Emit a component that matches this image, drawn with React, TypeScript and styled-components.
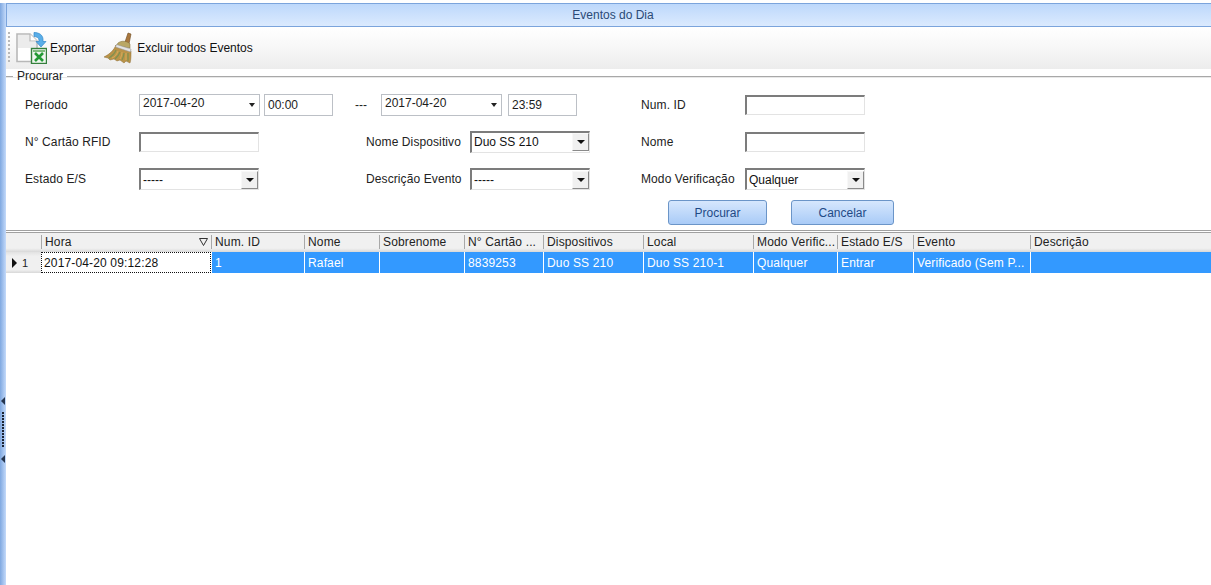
import styled, { createGlobalStyle } from "styled-components";

const GlobalStyle = createGlobalStyle`
  html, body {
    margin: 0;
    padding: 0;
    background: #fff;
  }
  body {
    font-family: "Liberation Sans", Arial, sans-serif;
    font-size: 12px;
    color: #1c1c1c;
    overflow: hidden;
  }
`;

const Page = styled.div`
  height: 585px;
  padding-top: 3px;
  box-sizing: border-box;
  display: flex;
`;

const SideBar = styled.div`
  width: 6px;
  flex: none;
  display: flex;
  flex-direction: column;
  align-items: center;
  padding-top: 394px;
  box-sizing: border-box;
  background: linear-gradient(to right, #7fa8e0, #c4dafa);
`;

const SideArrow = styled.div`
  width: 0;
  height: 0;
  border-top: 4px solid transparent;
  border-bottom: 4px solid transparent;
  border-right: 4px solid #26364f;
`;

const SideDots = styled.div`
  width: 2px;
  height: 36px;
  margin: 7px 0 7px;
  background: repeating-linear-gradient(to bottom, #1d2433 0 2px, transparent 2px 3px);
`;

const Main = styled.div`
  flex: 1;
  min-width: 0;
  display: flex;
  flex-direction: column;
`;

const TitleBar = styled.div`
  height: 24px;
  box-sizing: border-box;
  border-top: 1px solid #7ba4dc;
  border-bottom: 1px solid #7ba4dc;
  border-left: 1px solid #7ba4dc;
  display: flex;
  align-items: center;
  justify-content: center;
  padding-left: 8px;
  color: #2a4a76;
  background: linear-gradient(to bottom, #bdd8fb, #dbeafe);
`;

const Toolbar = styled.div`
  height: 42px;
  display: flex;
  align-items: center;
  padding-left: 2px;
  background: linear-gradient(to bottom, #ffffff, #f6f6f6 55%, #ececec);
`;

const Grip = styled.div`
  width: 2px;
  height: 32px;
  margin-right: 6px;
  background: repeating-linear-gradient(to bottom, #b8b8b8 0 2px, transparent 2px 4px);
`;

const ToolButton = styled.div`
  display: flex;
  align-items: center;
  height: 32px;
  margin-right: 9px;
  color: #111;
  svg {
    display: block;
    flex: none;
    margin-right: 3px;
  }
`;

const SearchGroup = styled.fieldset`
  margin: 0;
  padding: 0;
  border: 0;
  border-top: 1px solid #a8a8a8;
  box-shadow: inset 0 1px 0 #e8e8e8;
  height: 161px;
  box-sizing: border-box;
  min-width: 0;
`;

const GroupTitle = styled.legend`
  margin-left: 7px;
  padding: 0 4px;
  color: #222;
  line-height: 14px;
`;

const FormBody = styled.div`
  display: flex;
  flex-direction: column;
  padding: 3px 0 0 19px;
`;

const FormRow = styled.div<{ $height: number }>`
  display: flex;
  align-items: center;
  height: ${(p) => p.$height}px;
`;

const Cell = styled.div<{ $width: number }>`
  display: flex;
  align-items: center;
  flex: none;
  width: ${(p) => p.$width}px;
`;

const Label = styled.div<{ $width: number }>`
  flex: none;
  width: ${(p) => p.$width}px;
  color: #222;
  letter-spacing: 0.1px;
`;

const Dash = styled.div`
  flex: none;
  width: 26px;
  color: #222;
`;

const DateField = styled.div`
  width: 121px;
  height: 22px;
  box-sizing: border-box;
  border: 1px solid #bcc0c6;
  display: flex;
  align-items: center;
  justify-content: space-between;
  padding: 0 4px 3px 3px;
  &::after {
    content: "";
    margin-top: 3px;
    border-left: 3.5px solid transparent;
    border-right: 3.5px solid transparent;
    border-top: 4px solid #222;
  }
`;

const TimeField = styled.div<{ $gap: number }>`
  width: 69px;
  height: 22px;
  margin-left: ${(p) => p.$gap}px;
  box-sizing: border-box;
  border: 1px solid #bcc0c6;
  display: flex;
  align-items: center;
  padding: 0 3px;
`;

const TextBox = styled.div`
  width: 120px;
  height: 20px;
  box-sizing: border-box;
  border: 1px solid #e3e3e3;
  border-top: 2px solid #7c7c7c;
  border-left: 2px solid #7c7c7c;
`;

const SelectBox = styled.div`
  width: 120px;
  height: 22px;
  box-sizing: border-box;
  border: 1px solid #e3e3e3;
  border-top: 2px solid #7c7c7c;
  border-left: 2px solid #7c7c7c;
  display: flex;
  align-items: center;
  justify-content: space-between;
  padding-left: 2px;
  color: #111;
`;

const SelectArrow = styled.div`
  width: 17px;
  height: 18px;
  box-sizing: border-box;
  background: #f0f0f0;
  border: 1px solid;
  border-color: #f8f8f8 #8a8a8a #8a8a8a #f8f8f8;
  display: flex;
  align-items: center;
  justify-content: center;
  &::after {
    content: "";
    border-left: 4px solid transparent;
    border-right: 4px solid transparent;
    border-top: 4px solid #111;
  }
`;

const ButtonRow = styled.div`
  display: flex;
  margin-left: 643px;
  margin-top: 2px;
`;

const Button = styled.div<{ $width: number }>`
  width: ${(p) => p.$width}px;
  height: 25px;
  margin-right: 24px;
  box-sizing: border-box;
  border: 1px solid #6b95c8;
  border-radius: 3px;
  display: flex;
  align-items: center;
  justify-content: center;
  color: #1f4a86;
  background: linear-gradient(to bottom, #d6e7fd, #a9cbf7);
`;

const GridPanel = styled.div`
  flex: 1;
  border-top: 3px double #a0a0a0;
`;

const columns = "35px 170px 93px 75px 85px 79px 100px 110px 84px 76px 117px 1fr";

const HeaderRow = styled.div`
  display: grid;
  grid-template-columns: ${columns};
  height: 19px;
  background: linear-gradient(to bottom, #f0f0f0 80%, #d8d8d8);
`;

const HeadCell = styled.div`
  display: flex;
  align-items: center;
  justify-content: space-between;
  padding: 0 3px;
  margin: 2px 0 3px;
  min-width: 0;
  white-space: nowrap;
  color: #222;
  letter-spacing: 0.15px;
  border-left: 1px solid #a8a8a8;
`;

const HeadCorner = styled.div``;

const DataRow = styled.div`
  display: grid;
  grid-template-columns: ${columns};
  height: 21px;
`;

const RowMarker = styled.div`
  display: flex;
  align-items: center;
  padding-left: 6px;
  font-size: 11px;
  background: linear-gradient(to bottom, #e2e2e2, #f0f0f0 20%, #f0f0f0 85%, #d8d8d8);
  color: #222;
  &::before {
    content: "";
    margin-right: 5px;
    border-top: 5px solid transparent;
    border-bottom: 5px solid transparent;
    border-left: 5px solid #111;
  }
`;

const DataCell = styled.div<{ $active?: boolean }>`
  display: flex;
  align-items: center;
  padding-left: 3px;
  min-width: 0;
  white-space: nowrap;
  letter-spacing: 0.15px;
  color: ${(p) => (p.$active ? "#111" : "#fff")};
  background: ${(p) => (p.$active ? "#fff" : "#3399ff")};
  border-left: ${(p) => (p.$active ? "0" : "1px solid #fff")};
  outline: ${(p) => (p.$active ? "1px dotted #111" : "0")};
  outline-offset: -1px;
  box-sizing: border-box;
`;

const ExcelIcon = () => (
  <svg width="31" height="32" viewBox="0 0 31 32">
    <path d="M1 2h13l7 7v20.5H1z" fill="#fff" stroke="#b8b8b8" strokeWidth="1.6" />
    <path d="M2 3h12v7h6v6H2z" fill="#ececec" />
    <path d="M14 2v7h7" fill="#fff" stroke="#b8b8b8" strokeWidth="1.2" />
    <path d="M18 .5c5 0 9 2.500 9 7v2h3l-5 5.500-5-5.500h3V8c0-2-2.500-3.500-5-3.500z" fill="#5aaee8" stroke="#2f86c8" strokeWidth=".7" />
    <rect x="15.500" y="16.500" width="15" height="15" fill="#eef6ee" stroke="#347f3c" strokeWidth="1.400" />
    <rect x="17" y="18" width="12" height="2" fill="#7dbb7d" />
    <path d="M19 21l8 8M27 21l-8 8" stroke="#229a34" strokeWidth="2.600" />
  </svg>
);

const BroomIcon = () => (
  <svg width="30" height="32" viewBox="0 0 30 32">
    <path d="M21 10l3-9 3 1-2 10z" fill="#a9773d" stroke="#6f4b22" strokeWidth=".6" />
    <path d="M14 11c3-2.500 9-2.500 12 1v4l-14-2z" fill="#b9a765" stroke="#7d6a35" strokeWidth=".5" />
    <path d="M12 14l15 5c0 5 0 9-1 12l-4-2-2 2-4-3-3 1-3-2-4 1-2-2-4-1c6-3 10-7 12-12z" fill="#bb9348" stroke="#8a6a30" strokeWidth=".5" />
    <path d="M12.500 12.500l14.500 4.500-.5 3-15-5z" fill="#e4e4e4" stroke="#8e8e8e" strokeWidth=".5" />
    <path d="M12 18c-1 3-4 6-7 8M16 20c-1 3-3 5-5 7M20 21c0 3-1 5-2 7M24 21v8" stroke="#7f9150" strokeWidth="1.200" fill="none" />
    <path d="M14 19c-1 3-3 6-6 7M18 20c0 3-1 5-2 7M22 21v7" stroke="#d9b25e" strokeWidth=".8" fill="none" />
  </svg>
);

const headers = [
  "Hora",
  "Num. ID",
  "Nome",
  "Sobrenome",
  "N° Cartão ...",
  "Dispositivos",
  "Local",
  "Modo Verific...",
  "Estado E/S",
  "Evento",
  "Descrição",
];

const rowValues = [
  "1",
  "Rafael",
  "",
  "8839253",
  "Duo SS 210",
  "Duo SS 210-1",
  "Qualquer",
  "Entrar",
  "Verificado (Sem P...",
  "",
];

export default function App() {
  return (
    <>
      <GlobalStyle />
      <Page>
        <SideBar>
          <SideArrow />
          <SideDots />
          <SideArrow />
        </SideBar>
        <Main>
          <TitleBar>Eventos do Dia</TitleBar>
          <Toolbar>
            <Grip />
            <ToolButton>
              <ExcelIcon />
              Exportar
            </ToolButton>
            <ToolButton>
              <BroomIcon />
              Excluir todos Eventos
            </ToolButton>
          </Toolbar>
          <SearchGroup>
            <GroupTitle>Procurar</GroupTitle>
            <FormBody>
              <FormRow $height={37}>
                <Cell $width={330}>
                  <Label $width={114}>Período</Label>
                  <DateField>2017-04-20</DateField>
                  <TimeField $gap={4}>00:00</TimeField>
                </Cell>
                <Dash>---</Dash>
                <Cell $width={260}>
                  <DateField>2017-04-20</DateField>
                  <TimeField $gap={6}>23:59</TimeField>
                </Cell>
                <Label $width={104}>Num. ID</Label>
                <TextBox />
              </FormRow>
              <FormRow $height={37}>
                <Cell $width={341}>
                  <Label $width={114}>N° Cartão RFID</Label>
                  <TextBox />
                </Cell>
                <Cell $width={275}>
                  <Label $width={104}>Nome Dispositivo</Label>
                  <SelectBox>
                    Duo SS 210
                    <SelectArrow />
                  </SelectBox>
                </Cell>
                <Label $width={104}>Nome</Label>
                <TextBox />
              </FormRow>
              <FormRow $height={38}>
                <Cell $width={341}>
                  <Label $width={114}>Estado E/S</Label>
                  <SelectBox>
                    -----
                    <SelectArrow />
                  </SelectBox>
                </Cell>
                <Cell $width={275}>
                  <Label $width={104}>Descrição Evento</Label>
                  <SelectBox>
                    -----
                    <SelectArrow />
                  </SelectBox>
                </Cell>
                <Label $width={104}>Modo Verificação</Label>
                <SelectBox>
                  Qualquer
                  <SelectArrow />
                </SelectBox>
              </FormRow>
              <ButtonRow>
                <Button $width={99}>Procurar</Button>
                <Button $width={103}>Cancelar</Button>
              </ButtonRow>
            </FormBody>
          </SearchGroup>
          <GridPanel>
            <HeaderRow>
              <HeadCorner />
              {headers.map((h, i) => (
                <HeadCell key={h}>
                  {h}
                  {i === 0 && (
                    <svg width="9" height="8" viewBox="0 0 9 8">
                      <path d="M.5.5h8L4.5 7.500z" fill="none" stroke="#333" />
                    </svg>
                  )}
                </HeadCell>
              ))}
            </HeaderRow>
            <DataRow>
              <RowMarker>1</RowMarker>
              <DataCell $active>2017-04-20 09:12:28</DataCell>
              {rowValues.map((v, i) => (
                <DataCell key={i}>{v}</DataCell>
              ))}
            </DataRow>
          </GridPanel>
        </Main>
      </Page>
    </>
  );
}
